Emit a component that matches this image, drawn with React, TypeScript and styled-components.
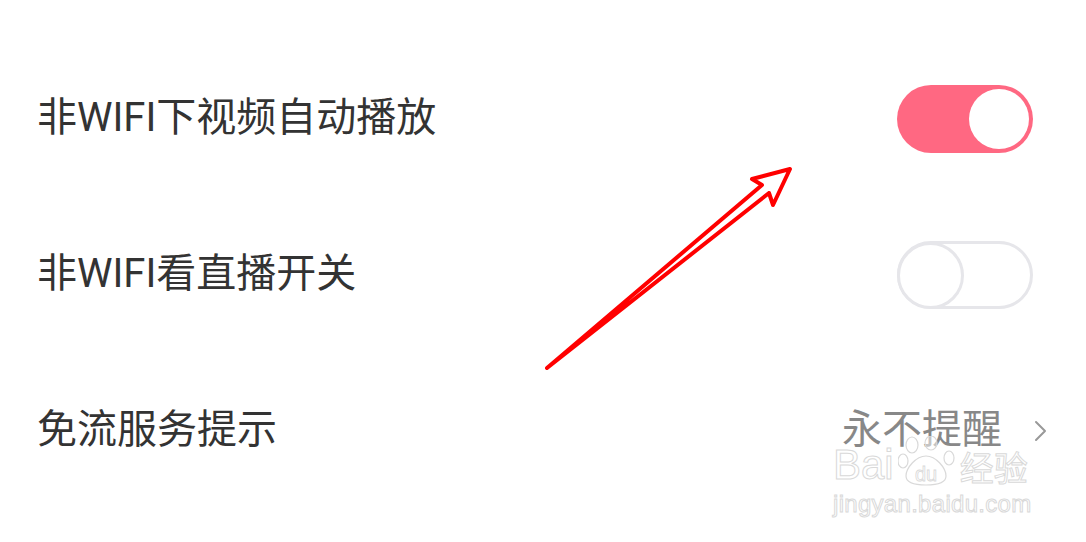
import styled, { createGlobalStyle } from 'styled-components';

const GlobalStyle = createGlobalStyle`
  html, body {
    margin: 0;
    padding: 0;
    background: #ffffff;
  }
  body {
    font-family: Roboto, 'Noto Sans CJK SC', sans-serif;
  }
`;

const Page = styled.div`
  position: relative;
  width: 1086px;
  height: 542px;
  overflow: hidden;
  background: #ffffff;
`;

const List = styled.ul`
  list-style: none;
  margin: 0;
  padding: 41px 0 0 37px;
  display: flex;
  flex-direction: column;
`;

const Row = styled.li<{ $right: number }>`
  height: 156px;
  display: flex;
  align-items: center;
  justify-content: space-between;
  padding-right: ${(props) => props.$right}px;
`;

const Label = styled.span`
  font-size: 40px;
  color: #333333;
  line-height: 1;
  margin-top: -2px;
`;

const Track = styled.div<{ $on: boolean }>`
  box-sizing: border-box;
  width: 136px;
  height: 68px;
  border-radius: 34px;
  display: flex;
  align-items: center;
  justify-content: ${(props) => (props.$on ? 'flex-end' : 'flex-start')};
  padding: ${(props) => (props.$on ? '0 4px' : '0')};
  background: ${(props) => (props.$on ? '#ff6882' : '#ffffff')};
  border: ${(props) => (props.$on ? 'none' : '3px solid #e6e6ea')};
`;

const Knob = styled.div<{ $on: boolean }>`
  box-sizing: border-box;
  width: ${(props) => (props.$on ? '60px' : '67px')};
  height: ${(props) => (props.$on ? '60px' : '67px')};
  margin: ${(props) => (props.$on ? '0' : '0 0 0 -3px')};
  border-radius: 50%;
  background: #ffffff;
  border: ${(props) => (props.$on ? 'none' : '3px solid #e6e6ea')};
`;

const Value = styled.div`
  display: flex;
  align-items: center;
  gap: 32px;
`;

const ValueText = styled.span`
  font-size: 40px;
  color: #888888;
  line-height: 1;
  margin-top: -2px;
`;

const Watermark = styled.div`
  position: absolute;
  left: 833px;
  top: 436px;
  display: flex;
  flex-direction: column;
  align-items: flex-start;
  pointer-events: none;
`;

const LogoLine = styled.div`
  display: flex;
  align-items: flex-end;
  gap: 4px;
`;

const OutlineText = styled.span<{ $size: number }>`
  font-family: 'Liberation Sans', Arial, 'Noto Sans CJK SC', sans-serif;
  font-size: ${(props) => props.$size}px;
  line-height: 1;
  color: rgba(255, 255, 255, 0.6);
  -webkit-text-stroke: 1px #d9d9d9;
`;

const Domain = styled(OutlineText)`
  margin-top: 6px;
  letter-spacing: 0.3px;
`;

const ArrowLayer = styled.svg`
  position: absolute;
  left: 0;
  top: 0;
  pointer-events: none;
`;

function Toggle({ on }: { on: boolean }) {
  return (
    <Track $on={on}>
      <Knob $on={on} />
    </Track>
  );
}

function Chevron() {
  return (
    <svg width='13' height='22' viewBox='0 0 13 22'>
      <polyline
        points='2,2 11,11 2,20'
        fill='none'
        stroke='#999999'
        strokeWidth='2'
        strokeLinecap='round'
        strokeLinejoin='round'
      />
    </svg>
  );
}

function Paw() {
  return (
    <svg width='58' height='50' viewBox='0 0 58 50'>
      <g fill='rgba(255,255,255,0.5)' stroke='#d9d9d9' strokeWidth='1.2'>
        <ellipse cx='14' cy='9' rx='6' ry='8' />
        <ellipse cx='33' cy='7' rx='6' ry='7' />
        <ellipse cx='5' cy='25' rx='5' ry='7' />
        <ellipse cx='51' cy='22' rx='5' ry='7' />
        <path d='M28 20 C18 20 8 32 8 40 C8 47 16 49 28 49 C40 49 48 47 48 40 C48 32 38 20 28 20 Z' />
      </g>
      <text
        x='28'
        y='45'
        textAnchor='middle'
        fontFamily="'Liberation Sans', Arial, sans-serif"
        fontSize='20'
        fill='rgba(255,255,255,0.6)'
        stroke='#d9d9d9'
        strokeWidth='0.8'
      >
        du
      </text>
    </svg>
  );
}

export default function App() {
  return (
    <Page>
      <GlobalStyle />
      <List>
        <Row $right={53}>
          <Label>非WIFI下视频自动播放</Label>
          <Toggle on={true} />
        </Row>
        <Row $right={53}>
          <Label>非WIFI看直播开关</Label>
          <Toggle on={false} />
        </Row>
        <Row $right={39}>
          <Label>免流服务提示</Label>
          <Value>
            <ValueText>永不提醒</ValueText>
            <Chevron />
          </Value>
        </Row>
      </List>

      <Watermark>
        <LogoLine>
          <OutlineText $size={42}>Bai</OutlineText>
          <Paw />
          <OutlineText $size={34}>经验</OutlineText>
        </LogoLine>
        <Domain $size={24}>jingyan.baidu.com</Domain>
      </Watermark>

      <ArrowLayer width='1086' height='542' viewBox='0 0 1086 542'>
        <path
          d='M547 368 L762 185 L752 179 L790 169 L773 205 L769 193 Z'
          fill='none'
          stroke='#ff0000'
          strokeWidth='4'
          strokeLinejoin='round'
          strokeLinecap='round'
        />
      </ArrowLayer>
    </Page>
  );
}
